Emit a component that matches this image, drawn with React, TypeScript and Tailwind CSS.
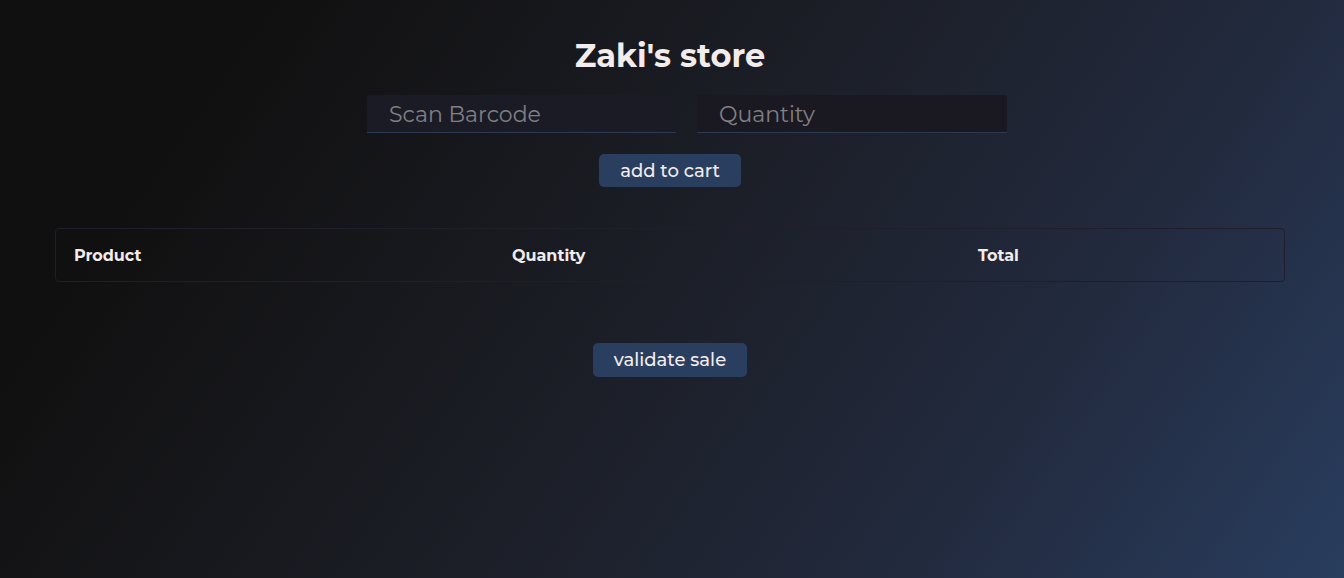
import React from "react";

export default function App() {
  return (
    <div className="min-h-[578px] w-full bg-[linear-gradient(125deg,#111010_15%,#1c1f28_50%,#222a3e_75%,#293d5e_100%)] text-[#f3ecec] font-['Montserrat','Inter',sans-serif]">
      <div className="w-[1340px]">
        <div className="flex flex-col items-center pt-[36px]">
          <h1 className="text-[32px] font-bold leading-[40px]">Zaki&apos;s store</h1>

          <div className="ml-[34px] mt-[19px] flex gap-[21px]">
            <input
              placeholder="Scan Barcode"
              className="h-[38px] w-[309px] rounded-t-[3px] border-b border-[#2e3a55] bg-[#1b1b26] px-[22px] pt-[2px] text-[22px] text-white outline-none placeholder:text-[#808084]"
            />
            <input
              placeholder="Quantity"
              className="h-[38px] w-[310px] rounded-t-[3px] border-b border-[#2e3a55] bg-[#1a1922] px-[22px] pt-[2px] text-[22px] text-white outline-none placeholder:text-[#808084]"
            />
          </div>

          <button className="mt-[21px] h-[33px] w-[142px] rounded-[5px] bg-[#2a3f5f] pt-[2px] text-[18px] font-medium text-[#f3ecec]">
            add to cart
          </button>
        </div>

        <div className="mx-[55px] mt-[41px] grid h-[54px] grid-cols-[438px_466px_1fr] items-center rounded-[4px] border border-[#1f1e2a] px-[18px] pt-[1px] text-[16px] font-bold">
          <div>Product</div>
          <div>Quantity</div>
          <div>Total</div>
        </div>

        <div className="mt-[61px] flex justify-center">
          <button className="h-[34px] w-[154px] rounded-[5px] bg-[#2a3f5f] pt-[1px] text-[18px] font-medium text-[#f3ecec]">
            validate sale
          </button>
        </div>
      </div>
    </div>
  );
}
